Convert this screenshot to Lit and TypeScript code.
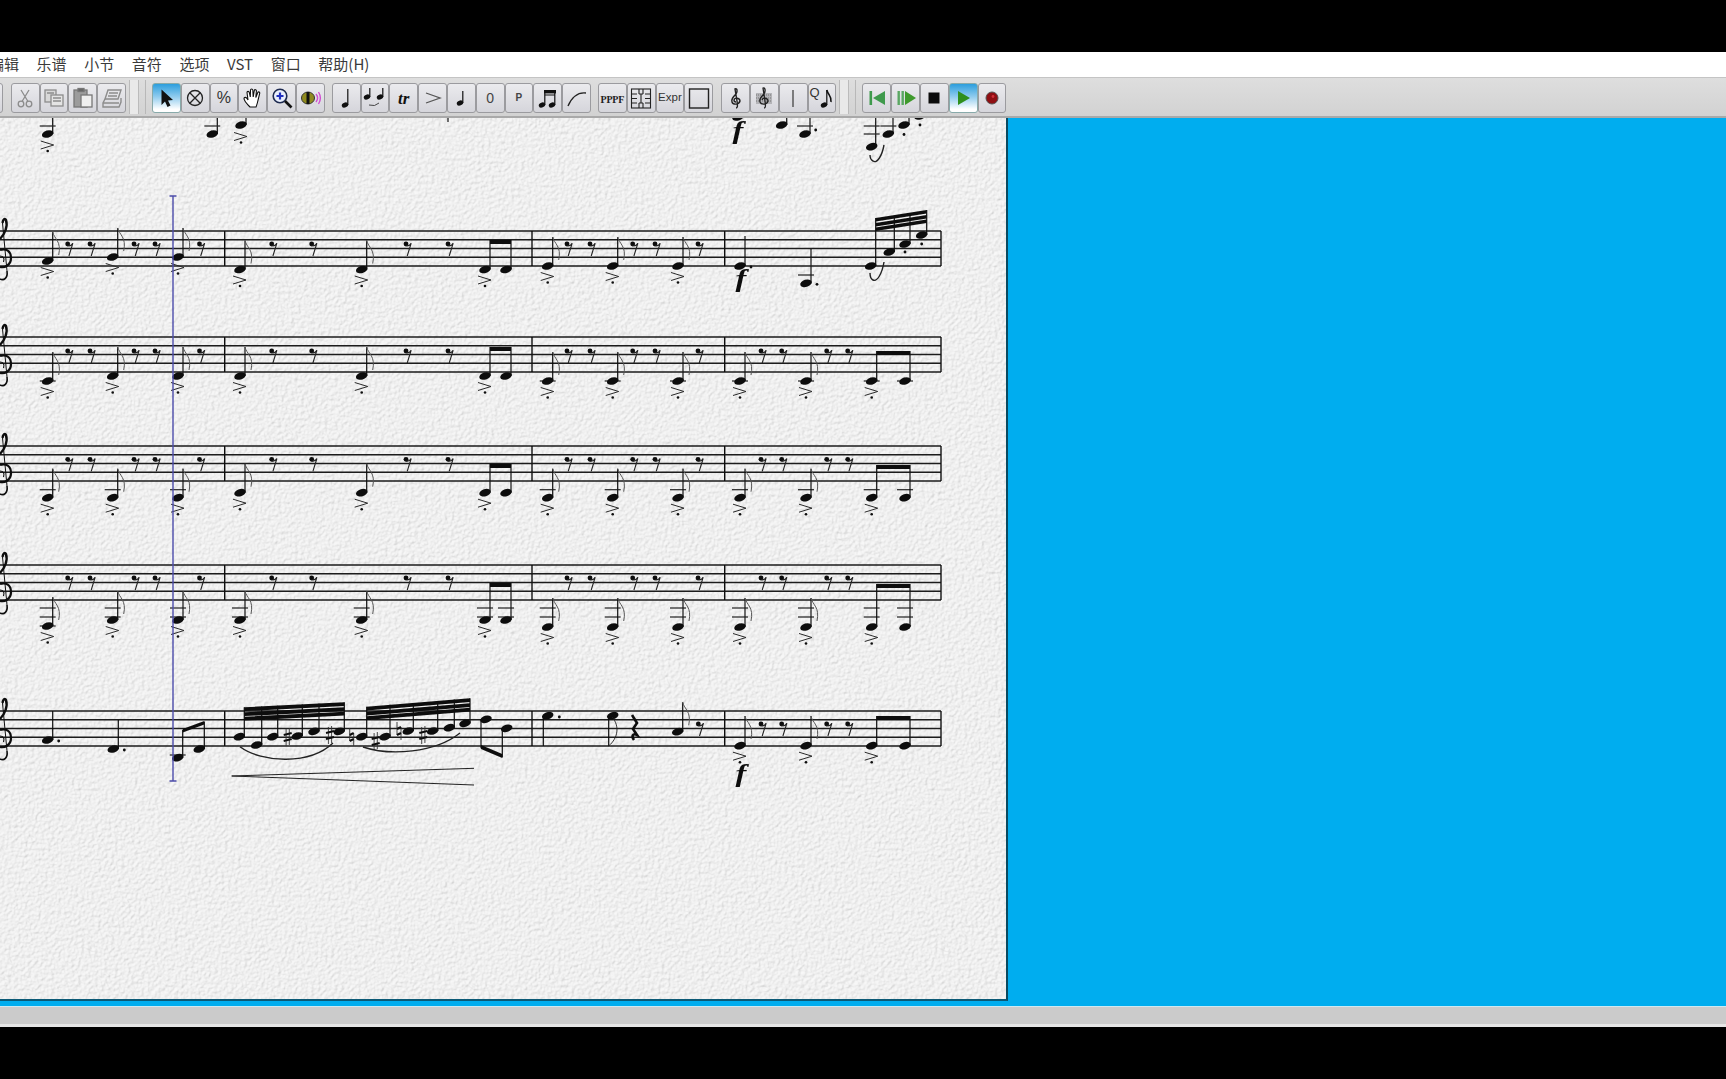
import { LitElement, html, css, svg, nothing } from "lit";
import { customElement } from "lit/decorators.js";

const STEM = 5;
const ink = "#0c0c0c";

const rest = (x: number, y: number) => svg`
  <circle cx=${x} cy=${y} r="2.4" fill=${ink}></circle>
  <path d="M${x} ${y + 1.6} Q${x + 3} ${y + 2.6} ${x + 5.2} ${y - 0.8} L${x + 1.2} ${y + 12}" fill="none" stroke="#222" stroke-width="1.1"></path>`;

const head = (x: number, y: number) => svg`
  <ellipse cx=${x} cy=${y} rx="5.9" ry="3.6" transform="rotate(-16 ${x} ${y})" fill=${ink}></ellipse>`;

const ledger = (x: number, y: number) => svg`
  <line x1=${x - 8} x2=${x + 8} y1=${y} y2=${y} stroke="#222" stroke-width="1.2"></line>`;

const accent = (x: number, y: number) => svg`
  <path d="M${x - 7} ${y - 4} L${x + 6} ${y} L${x - 7} ${y + 4}" fill="none" stroke="#2a2a2a" stroke-width="1"></path>
  <circle cx=${x} cy=${y + 6} r="1.3" fill=${ink}></circle>`;

const flag = (sx: number, top: number) => svg`
  <path d="M${sx} ${top} C${sx + 1.5} ${top + 7} ${sx + 9} ${top + 9} ${sx + 6} ${top + 23}" fill="none" stroke="#555" stroke-width="1"></path>`;

const stem = (sx: number, y1: number, y2: number) => svg`
  <line x1=${sx} x2=${sx} y1=${y1} y2=${y2} stroke="#111" stroke-width="1.2"></line>`;

const beam = (x1: number, y1: number, x2: number, y2: number, t = 4) => svg`
  <polygon points="${x1},${y1} ${x2},${y2} ${x2},${y2 + t} ${x1},${y1 + t}" fill=${ink}></polygon>`;

const dot = (x: number, y: number) => svg`<circle cx=${x} cy=${y} r="1.4" fill=${ink}></circle>`;

const slur = (d: string, w = 1.4) => svg`<path d=${d} fill="none" stroke="#222" stroke-width=${w}></path>`;

const forte = (x: number, y: number) => svg`<text transform="translate(${x} ${y}) scale(1.25 1)" class="dyn" text-anchor="middle">f</text>`;

const clef = (t: number) => svg`
  <g fill="none" stroke="#111">
    <path d="M0 ${t + 8} C5 ${t + 3} 8 ${t - 5} 6 ${t - 11} C5 ${t - 13} 3 ${t - 12} 2.5 ${t - 8}" stroke-width="2.4"></path>
    <path d="M2.5 ${t - 8} L7 ${t + 40}" stroke-width="1"></path>
    <path d="M0 ${t + 19} C6 ${t + 17} 11 ${t + 20} 11 ${t + 27} C11 ${t + 34} 5 ${t + 37} 0 ${t + 36}" stroke-width="2.2"></path>
    <path d="M0 ${t + 25} C3 ${t + 25} 5 ${t + 27} 3.5 ${t + 31}" stroke-width="1.2"></path>
    <path d="M0 ${t + 48} C4 ${t + 50} 8 ${t + 47} 7 ${t + 40}" stroke-width="1.6"></path>
  </g>`;

const note = (
  x: number, y: number, top: number,
  o: { f?: boolean; a?: boolean; l?: number[]; d?: boolean } = {}
) => svg`
  ${(o.l ?? []).map((ly) => ledger(x, ly))}
  ${stem(x + STEM, y, top)}
  ${head(x, y)}
  ${o.f ? flag(x + STEM, top) : nothing}
  ${o.a ? accent(x, y + 10.5) : nothing}
  ${o.d ? dot(x + 11, y + 1) : nothing}`;

const staffTops = [231, 337, 446, 565, 711];
const bars = [224.7, 532, 724.7, 941];
const h = 8.75;

const staff = (t: number) => svg`
  ${[0, 1, 2, 3, 4].map((i) => svg`<line x1="0" x2="941" y1=${t + i * h} y2=${t + i * h} stroke="#1c1c1c" stroke-width="1.3"></line>`)}
  ${bars.map((b) => svg`<line x1=${b} x2=${b} y1=${t} y2=${t + 35} stroke="#111" stroke-width="1.4"></line>`)}
  ${clef(t)}`;

const restCols = [67.7, 90, 134, 155, 199.5, 271.7, 311.7, 406, 448, 567, 590, 632.7, 655, 698];
const restColsM4 = [761, 781.7, 826.7, 847.7];

type Row = {
  rest: number;
  m1: [number, number, number];
  m1L: number[][];
  m2: number;
  m2L: number[];
  m2Beam: number;
  m3: number;
  m3L: number[];
  m4Beam: number;
};

const rows: Row[] = [
  { rest: 244, m1: [261, 257, 257], m1L: [[], [], []], m2: 269.5, m2L: [], m2Beam: 240, m3: 266, m3L: [], m4Beam: 0 },
  { rest: 351, m1: [381, 376, 376], m1L: [[381], [], []], m2: 376, m2L: [], m2Beam: 347, m3: 381, m3L: [381], m4Beam: 351 },
  { rest: 459.3, m1: [497.7, 497.7, 497.7], m1L: [[489.7], [489.7], [489.7]], m2: 492.7, m2L: [], m2Beam: 464, m3: 497.7, m3L: [489.7], m4Beam: 465 },
  { rest: 578, m1: [626, 620, 620], m1L: [[608, 617, 626], [608, 617], [608, 617]], m2: 620, m2L: [608, 617], m2Beam: 583, m3: 627, m3L: [608, 617], m4Beam: 584 },
];

const regularRow = (r: Row, i: number) => svg`
  ${restCols.map((x) => rest(x, r.rest))}
  ${i > 0 ? restColsM4.map((x) => rest(x, r.rest)) : nothing}
  ${[47.7, 112.7, 178].map((x, k) => note(x, r.m1[k], r.m1[k] - 29, { f: true, a: true, l: r.m1L[k] }))}
  ${[240, 361.7].map((x) => note(x, r.m2, r.m2 - 29, { f: true, a: true, l: r.m2L }))}
  ${[547.7, 612.7, 678].map((x) => note(x, r.m3, r.m3 - 29, { f: true, a: true, l: r.m3L }))}
  ${note(485, r.m2, r.m2Beam, { a: true, l: r.m2L })}
  ${note(506, r.m2, r.m2Beam, { l: r.m2L })}
  ${beam(490, r.m2Beam, 511, r.m2Beam)}
  ${i > 0 ? svg`
    ${[740, 806].map((x) => note(x, r.m3, r.m3 - 29, { f: true, a: true, l: r.m3L }))}
    ${note(871.7, r.m3, r.m4Beam, { a: true, l: r.m3L })}
    ${note(905, r.m3, r.m4Beam, { l: r.m3L })}
    ${beam(876.7, r.m4Beam, 910, r.m4Beam)}` : nothing}`;

const topFragment = () => svg`
  ${stem(52.7, 118, 134)}
  ${ledger(47.7, 126)}${head(47.7, 134)}${accent(47.7, 145)}
  ${stem(217.3, 118, 134)}
  ${ledger(212.3, 126)}${head(212.3, 134)}
  ${stem(246, 118, 125)}
  ${head(241, 125)}${accent(241, 136.5)}
  ${stem(448, 118, 122)}
  ${head(738, 117)}${forte(738, 139)}
  ${stem(786.7, 118, 125)}
  ${head(781.7, 125)}
  ${stem(810, 118, 134)}
  ${ledger(805, 126)}${head(805, 134)}${dot(815.7, 130)}
  ${stem(875.7, 118, 146)}
  ${ledger(871.7, 126)}${ledger(871.7, 134)}${head(871.7, 146.7)}
  ${stem(893, 118, 134)}
  ${ledger(888.3, 126)}${head(888.3, 134)}
  ${stem(909, 118, 125)}
  ${head(904, 125)}${dot(904, 134.5)}
  ${head(920, 116)}${dot(920, 125)}
  ${slur("M884 145 C882 156 877 164 873 161 C871 160 870 157 870 155", 1.4)}`;

const row1M4 = () => svg`
  ${note(740, 266, 236, { d: true })}
  ${forte(741, 287)}
  ${ledger(806, 275)}
  ${note(806, 283.3, 249, { d: true })}
  ${note(870.7, 266, 218)}
  ${note(889.3, 252, 216)}
  ${note(905, 244, 213)}
  ${note(921.7, 235, 210)}
  ${[0, 5, 9.5].map((o) => beam(875.7, 218 + o, 926.7, 210 + o, 3.4))}
  ${dot(905, 252)}${dot(921.7, 244)}
  ${slur("M884 262 C882 274 877 282 873 280 C871 279 870 276 870 273", 1.4)}`;

const run1: [number, number][] = [[239.3, 736.7], [256.7, 745], [272.7, 736.7], [297.3, 736], [314, 731.3], [339.3, 731.3]];
const run2: [number, number][] = [[361.7, 736.7], [385, 736.7], [408.3, 731], [432.7, 731], [449.3, 727.7], [465, 723.3]];
const sharp = (x: number, y: number) => svg`
  <path d="M${x - 1.6} ${y - 8} V${y + 9} M${x + 1.6} ${y - 9} V${y + 8}" stroke="#333" stroke-width="0.9" fill="none"></path>
  <path d="M${x - 4} ${y - 2} L${x + 4} ${y - 4} M${x - 4} ${y + 4} L${x + 4} ${y + 2}" stroke="#111" stroke-width="2" fill="none"></path>`;
const natural = (x: number, y: number) => svg`
  <path d="M${x - 2} ${y - 9} V${y + 4} M${x + 2} ${y - 4} V${y + 9}" stroke="#333" stroke-width="0.9" fill="none"></path>
  <path d="M${x - 2} ${y - 2} L${x + 2} ${y - 4} M${x - 2} ${y + 4} L${x + 2} ${y + 2}" stroke="#111" stroke-width="2" fill="none"></path>`;

const beamTop = (x: number, x1: number, y1: number, x2: number, y2: number) =>
  y1 + ((x - x1) / (x2 - x1)) * (y2 - y1);

const run = (notes: [number, number][], x1: number, y1: number, x2: number, y2: number) => svg`
  ${notes.map(([x, y]) => note(x, y, beamTop(x + STEM, x1, y1, x2, y2)))}
  ${[0, 5, 9.5].map((o) => beam(x1, y1 + o, x2, y2 + o, 3.8))}`;

const row5 = () => svg`
  ${note(47.7, 740, 711, { d: true })}
  ${note(113.3, 749, 720, { d: true })}
  ${ledger(177.7, 755)}
  ${note(177.7, 757.7, 730)}
  ${note(199.3, 749, 721.7)}
  ${beam(182.7, 729, 204.3, 721, 3.4)}
  ${run(run1, 244.3, 707.3, 344.3, 702.3)}
  ${run(run2, 366.7, 706.7, 470, 698.3)}
  ${sharp(287.7, 737)}${sharp(330, 735)}
  ${natural(351.7, 737)}${sharp(375.7, 741)}${natural(399, 731)}${sharp(423.3, 735)}
  ${slur("M240 746.7 C262 763 310 765 333 743")}
  ${slur("M363 747 C390 756 435 753 460 733")}
  <path d="M231.7 776 L474 768.3 M231.7 776 L474 785" fill="none" stroke="#222" stroke-width="1"></path>
  ${head(486, 719.3)}${head(506.7, 728.3)}
  ${stem(481, 719.3, 748.3)}${stem(502.3, 728.3, 757.3)}
  ${beam(481, 745, 502.3, 754, 4)}
  ${head(547.7, 715.7)}${stem(543.3, 716, 746)}${dot(559.3, 717)}
  ${head(612.7, 715.7)}${stem(608.7, 716, 746)}
  ${slur("M608.7 746 C618 738 620 726 612 717", 0.9)}
  <path d="M632 715 L637 723 L633 729 L637 735 C633 733 631 736 634 740" fill="none" stroke="#111" stroke-width="2.6"></path>
  ${note(677.7, 731.7, 702.3, { f: true })}
  ${rest(698.3, 724)}
  ${[740, 806].map((x) => note(x, 745.7, 716, { f: true, a: true }))}
  ${note(871.7, 745.7, 716, { a: true })}
  ${note(905, 745.7, 716)}
  ${beam(876.7, 716, 910, 716)}
  ${restColsM4.map((x) => rest(x, 724))}
  ${forte(741, 782)}`;

/* ---------- toolbar icons ---------- */
const ic = (c: unknown) => html`<svg class="ic" viewBox="0 0 24 24" width="24" height="24">${c}</svg>`;
const dis = "#8c8c8c";
const quarter = (x: number, y: number, top: number) => svg`
  <ellipse cx=${x} cy=${y} rx="3.3" ry="2.5" transform="rotate(-20 ${x} ${y})" fill="#111"></ellipse>
  <line x1=${x + 2.8} x2=${x + 2.8} y1=${y} y2=${top} stroke="#111" stroke-width="1.2"></line>`;

const icons: Record<string, unknown> = {
  blank: nothing,
  cut: ic(svg`<g fill="none" stroke=${dis} stroke-width="1.3"><circle cx="8" cy="18" r="2.8"></circle><circle cx="16" cy="18" r="2.8"></circle><path d="M9 15.5 L16 4 M15 15.5 L8 4"></path></g>`),
  copy: ic(svg`<g fill="#d8d8d8" stroke=${dis} stroke-width="1.3"><rect x="3" y="4" width="11" height="12"></rect><rect x="9" y="9" width="12" height="11" fill="#e4e4e4"></rect><path d="M11 12 H19 M11 15 H19 M5 7 H12" fill="none"></path></g>`),
  paste: ic(svg`<g stroke="#777" stroke-width="1.3"><rect x="3" y="4" width="13" height="17" fill="#9c9c9c"></rect><rect x="7" y="2.5" width="6" height="3" fill="#666"></rect><rect x="10" y="9" width="11" height="12" fill="#efefef"></rect></g>`),
  print: ic(svg`<g fill="none" stroke=${dis} stroke-width="1.4"><path d="M8 4 H21 L18 13 H5 Z"></path><path d="M5 13 L3 17 V21 H19 L21 16 V12"></path><path d="M9 7 H18 M8 10 H17 M3 17 H19"></path></g>`),
  arrow: ic(svg`<path d="M7.5 3.5 V19 L11 15.5 L13.5 21 L16.5 19.5 L14 14.5 L19 14 Z" fill="#111"></path>`),
  nope: ic(svg`<g fill="none" stroke="#222" stroke-width="1.3"><circle cx="12" cy="12" r="7.5"></circle><path d="M6.8 6.8 L17.2 17.2 M17.2 6.8 L6.8 17.2"></path></g>`),
  pct: html`<span class="t pct">%</span>`,
  hand: ic(svg`<path d="M9 21 C6 18 3 14 3 12.5 C3 11 5 11 6 12.5 L7 14 L6 6.5 C6 5 8 5 8.3 6.5 L9.3 11 L9.5 4 C9.6 2.6 11.6 2.6 11.8 4 L12.2 11 L13.3 4.5 C13.6 3.2 15.5 3.5 15.4 5 L14.8 11.5 L16.8 6.5 C17.3 5.3 19 6 18.7 7.3 L16.8 15 C16.3 18 15.5 19.5 15 21 Z" fill="#fff" stroke="#111" stroke-width="1.1"></path>`),
  zoom: ic(svg`<circle cx="10" cy="10" r="6.8" fill="#e8eefc" stroke="#1d2a50" stroke-width="1.6"></circle><path d="M10 6.5 V13.5 M6.5 10 H13.5" stroke="#1f2fc0" stroke-width="2.2"></path><path d="M15 15 L21.5 21.5" stroke="#111" stroke-width="2.6"></path>`),
  speaker: ic(svg`<ellipse cx="10" cy="12" rx="6.5" ry="6" fill="#8f8a1e" stroke="#333" stroke-width="1"></ellipse><path d="M10 6 V18" stroke="#111" stroke-width="3"></path><path d="M18 8 C20 10.5 20 13.5 18 16 M20.5 6 C23 10 23 14 20.5 18" fill="none" stroke="#d24fd0" stroke-width="1.4"></path>`),
  note: ic(svg`${quarter(11, 19, 3)}`),
  tie: ic(svg`${quarter(4, 11, 2)}${quarter(17, 11, 2)}<path d="M6 19 Q12 21 16 17" fill="none" stroke="#444" stroke-width="1"></path>`),
  tr: html`<span class="t tr">tr</span>`,
  gt: ic(svg`<path d="M5 7 L19 12 L5 17" fill="none" stroke="#555" stroke-width="1.3"></path>`),
  note2: ic(svg`${quarter(11, 17, 5)}`),
  zero: html`<span class="t sm">0</span>`,
  pp: html`<span class="t xs">P</span>`,
  beamed: ic(svg`${quarter(6, 19, 5)}${quarter(16, 19, 5)}<rect x="8" y="4" width="12" height="3.4" fill="#111"></rect><line x1="8.8" x2="18.8" y1="9" y2="9" stroke="#111" stroke-width="1.2"></line>`),
  slur: ic(svg`<path d="M3 20 C7 11 13 6 21 7" fill="none" stroke="#222" stroke-width="1.4"></path>`),
  pppf: html`<span class="t pppf">PPPF</span>`,
  table: ic(svg`<g fill="none" stroke="#222" stroke-width="1.1"><rect x="2.5" y="3" width="19" height="19"></rect><path d="M10 3 V8 M14 3 V8 M10 22 V17 M14 22 V17 M10 8 H14 M10 17 H14 M12 8 V17 M2.5 8 H8 M2.5 12.5 H8 M2.5 17 H8 M16 8 H21.5 M16 12.5 H21.5 M16 17 H21.5"></path></g>`),
  expr: html`<span class="t expr">Expr</span>`,
  rect: ic(svg`<rect x="2.5" y="3" width="19" height="19" fill="none" stroke="#222" stroke-width="1.4"></rect>`),
  clef: ic(svg`<path d="M12 22 C14 22 13.5 19 13 15 L11 3 C13 2 14 5 12 8 C9 11 7 13 8 16 C9 19 15 19 16 15 C16 12 11 11 10 14 C10 15.5 11 16 12 16" fill="none" stroke="#222" stroke-width="1.4"></path>`),
  clef2: ic(svg`<rect x="4" y="7" width="16" height="11" fill="#b4b4b8"></rect><path d="M4 9 H20 M4 12 H20 M4 15 H20" stroke="#777" stroke-dasharray="1 1"></path><path d="M12 22 C14 22 13.5 19 13 15 L11 2 C13 1 14 5 12 8 C9 11 7 13 8 16 C9 19 15 19 16 15 C16 12 11 11 10 14" fill="none" stroke="#222" stroke-width="1.3"></path>`),
  bar: ic(svg`<line x1="12" x2="12" y1="4" y2="21" stroke="#444" stroke-width="1.3"></line>`),
  qnote: html`<span class="t qq">Q</span>${ic(svg`${quarter(14, 19, 4)}<path d="M16.8 4 C18 9 22 10 21 16" fill="none" stroke="#111" stroke-width="1.6"></path>`)}`,
  first: ic(svg`<rect x="4.5" y="5" width="2.6" height="14" fill="#3f9a4d"></rect><path d="M20 5 V19 L8 12 Z" fill="#3f9a4d"></path>`),
  playf: ic(svg`<rect x="3.5" y="5" width="2.4" height="14" fill="#5aa763"></rect><rect x="7.5" y="5" width="2.4" height="14" fill="#5aa763"></rect><path d="M11 5 V19 L22 12 Z" fill="#3f9a2d"></path>`),
  stop: ic(svg`<rect x="6.5" y="6.5" width="11" height="11" fill="#0c0c0c"></rect>`),
  play: ic(svg`<path d="M7 5 V19 L19 12 Z" fill="#2f8f1d"></path>`),
  rec: ic(svg`<circle cx="12" cy="12" r="6" fill="#8f0f14" stroke="#555" stroke-width="1"></circle><circle cx="13" cy="10.5" r="1.4" fill="#d03038"></circle>`),
};

const groups: { cls: string; items: string[] }[] = [
  { cls: "g0", items: ["blank"] },
  { cls: "g1", items: ["cut", "copy", "paste", "print"] },
  { cls: "g2", items: ["arrow", "nope", "pct", "hand", "zoom", "speaker"] },
  { cls: "g3", items: ["note", "tie", "tr", "gt", "note2", "zero", "pp", "beamed", "slur"] },
  { cls: "g4", items: ["pppf", "table", "expr", "rect"] },
  { cls: "g5", items: ["clef", "clef2", "bar", "qnote"] },
  { cls: "g6", items: ["first", "playf", "stop", "play", "rec"] },
];
const activeIcons = new Set(["arrow", "play"]);
const menus = ["编辑", "乐谱", "小节", "音符", "选项", "VST", "窗口", "帮助(H)"];

@customElement("app-root")
export class AppRoot extends LitElement {
  static styles = css`
    :host {
      display: block;
      width: 1726px;
      height: 1079px;
      overflow: hidden;
      background: #000;
      font-family: "Noto Sans CJK SC", "Noto Sans", sans-serif;
    }
    .app { display: flex; flex-direction: column; height: 100%; }
    .top { height: 52px; background: #000; }
    .menu {
      height: 25px;
      box-sizing: border-box;
      padding-bottom: 2px;
      background: #fff;
      display: flex;
      align-items: center;
      gap: 17.6px;
      font-size: 15px;
      color: #3a3a3a;
      overflow: hidden;
    }
    .menu span:first-child { margin-left: -11px; }
    .toolbar {
      height: 41px;
      box-sizing: border-box;
      background: linear-gradient(#dedede, #d2d2d2);
      border-top: 1px solid #c4c4c4;
      border-bottom: 2px solid #a9a9a9;
      display: flex;
      align-items: flex-start;
      padding-top: 5px;
      overflow: hidden;
    }
    .group { display: flex; flex: none; }
    .g0 { margin-left: -26px; }
    .g1 { margin-left: 8px; }
    .g3 { margin-left: 7px; }
    .g4 { margin-left: 7px; }
    .g5 { margin-left: 8px; }
    .grip {
      flex: none;
      width: 26px;
      height: 34px;
      margin-top: -3px;
      display: flex;
      align-items: stretch;
      padding-left: 3px;
      box-sizing: border-box;
    }
    .grip i {
      display: block;
      width: 8px;
      background: #e9e9e9;
      border-left: 1px solid #bbb;
      border-right: 1px solid #bbb;
    }
    .grip b {
      display: block;
      width: 1px;
      margin-left: 6px;
      background: #b8b8b8;
    }
    .btn {
      flex: none;
      width: 28.8px;
      height: 30px;
      box-sizing: border-box;
      border: 1px solid #9b9b9f;
      border-radius: 3px;
      background: linear-gradient(#ebebee, #d5d5db);
      display: flex;
      align-items: center;
      justify-content: center;
      position: relative;
      color: #222;
      overflow: hidden;
    }
    .btn.on { background: linear-gradient(#2c9edd, #8fcbee 45%, #fff 90%); border-color: #8aa; }
    .ic { display: block; flex: none; }
    .t { font-family: "Liberation Sans", sans-serif; line-height: 1; }
    .pct { font-size: 16px; color: #333; }
    .tr { font-family: "Liberation Serif", serif; font-style: italic; font-weight: bold; font-size: 17px; color: #111; }
    .sm { font-size: 14px; color: #444; }
    .xs { font-size: 10px; font-weight: bold; color: #444; }
    .pppf { font-family: "Liberation Serif", serif; font-weight: bold; font-size: 10px; letter-spacing: -0.2px; color: #222; padding-top: 3px; }
    .expr { font-size: 11.5px; color: #333; }
    .qq { position: absolute; left: 1px; top: 2px; font-size: 13px; color: #333; }
    .main { height: 888px; background: #00adef; flex: none; display: flex; align-items: flex-start; }
    .page {
      flex: none;
      display: block;
      border-right: 2px solid #0a4a60;
      border-bottom: 2px solid #0c5a76;
    }
    .dyn { font-family: "Liberation Serif", serif; font-style: italic; font-weight: bold; font-size: 26px; fill: #111; }
    .pageno { font-family: "Liberation Serif", serif; font-size: 16.5px; fill: #222; }
    .status {
      height: 21px;
      flex: none;
      box-sizing: border-box;
      background: #cbcbcb;
      border-top: 1px solid #cfe9f2;
      border-bottom: 3px solid #e6e6e6;
    }
    .rest { flex: 1; background: #000; }
  `;

  private btn(name: string) {
    return html`<div class="btn ${activeIcons.has(name) ? "on" : ""}">${icons[name]}</div>`;
  }

  render() {
    const grip = html`<div class="grip"><i></i><b></b></div>`;
    return html`
      <div class="app">
        <div class="top"></div>
        <div class="menu">${menus.map((m) => html`<span>${m}</span>`)}</div>
        <div class="toolbar">
          ${groups.map(
            (g) => html`
              ${g.cls === "g2" || g.cls === "g6" ? grip : nothing}
              <div class="group ${g.cls}">${g.items.map((n) => this.btn(n))}</div>`
          )}
        </div>
        <div class="main">
          <svg class="page" width="1006" height="881" viewBox="0 118 1006 881">
            <defs>
              <filter id="paper" x="0" y="0" width="100%" height="100%" color-interpolation-filters="sRGB">
                <feTurbulence type="fractalNoise" baseFrequency="0.3" numOctaves="3" seed="7" result="n"></feTurbulence>
                <feDiffuseLighting in="n" surfaceScale="0.9" diffuseConstant="1" lighting-color="#fff">
                  <feDistantLight azimuth="45" elevation="68"></feDistantLight>
                </feDiffuseLighting>
                <feComponentTransfer>
                  <feFuncR type="linear" slope="0.45" intercept="0.525"></feFuncR>
                  <feFuncG type="linear" slope="0.45" intercept="0.525"></feFuncG>
                  <feFuncB type="linear" slope="0.45" intercept="0.525"></feFuncB>
                </feComponentTransfer>
              </filter>
              <filter id="soft" x="0" y="0" width="100%" height="100%" filterUnits="userSpaceOnUse" primitiveUnits="userSpaceOnUse">
                <feGaussianBlur stdDeviation="0.28"></feGaussianBlur>
              </filter>
            </defs>
            <rect x="0" y="118" width="1006" height="881" fill="#f0f0f0" filter="url(#paper)"></rect>
            <g filter="url(#soft)">
              ${staffTops.map((t) => staff(t))}
              ${rows.map((r, i) => regularRow(r, i))}
              ${topFragment()}
              ${row1M4()}
              ${row5()}
              <path d="M173 196 V781 M169.5 196 H176.5 M169.5 781 H176.5" fill="none" stroke="#4c4cab" stroke-width="1.4"></path>
              <text x="460.7" y="929" text-anchor="middle" class="pageno">-13-</text>
            </g>
          </svg>
        </div>
        <div class="status"></div>
        <div class="rest"></div>
      </div>
    `;
  }
}
